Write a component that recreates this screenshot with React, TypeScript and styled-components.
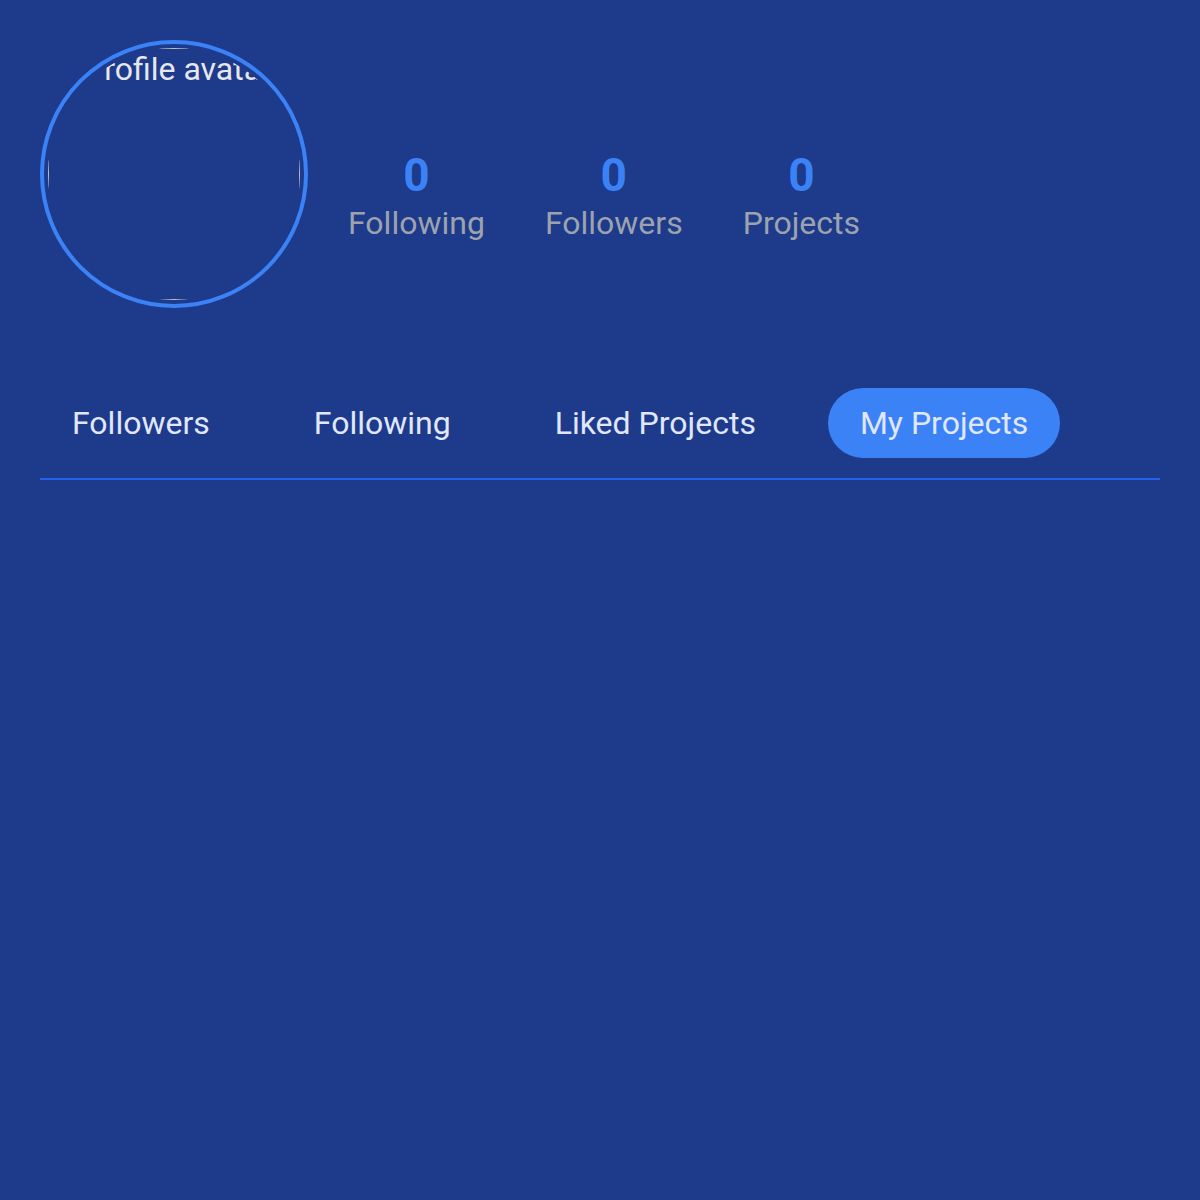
import React from "react";
import styled, { createGlobalStyle } from "styled-components";

const GlobalStyle = createGlobalStyle`
  html, body {
    margin: 0;
    padding: 0;
    background: #1e3a8a;
  }
  body {
    font-family: Roboto, "Noto Sans", "Liberation Sans", sans-serif;
    min-height: 1200px;
  }
`;

const Page = styled.div`
  padding: 40px;
  box-sizing: border-box;
  min-height: 1200px;
  background: #1e3a8a;
`;

const Header = styled.div`
  display: flex;
  align-items: flex-start;
  gap: 40px;
`;

const Avatar = styled.div`
  width: 252px;
  height: 252px;
  padding: 4px;
  flex-shrink: 0;
  border: 4px solid #3b82f6;
  border-radius: 50%;
`;

const AvatarImage = styled.div`
  width: 100%;
  height: 100%;
  border-radius: 50%;
  overflow: hidden;
`;

const AvatarFallback = styled.div`
  width: 100%;
  height: 100%;
  box-sizing: border-box;
  border: 1px solid #c0c0c0;
  padding: 1px 0 0 35px;
  color: #e5e7eb;
  font-size: 32px;
  white-space: nowrap;
`;

const Stats = styled.div`
  display: flex;
  gap: 60px;
  margin-top: 112px;
`;

const Stat = styled.div`
  display: flex;
  flex-direction: column;
  align-items: center;
`;

const StatValue = styled.span`
  color: #3b82f6;
  font-size: 46px;
  font-weight: 700;
  line-height: 1;
  margin-bottom: 6px;
`;

const StatLabel = styled.span`
  color: #9ca3af;
  font-size: 32px;
`;

const TabBar = styled.div`
  display: flex;
  gap: 40px;
  margin-top: 80px;
  padding-bottom: 20px;
  border-bottom: 2px solid #2563eb;
`;

const Tab = styled.button<{ $active?: boolean }>`
  font-family: inherit;
  font-size: 32px;
  line-height: normal;
  color: #e0e7ff;
  border: none;
  padding: 16px 32px;
  border-radius: 9999px;
  cursor: pointer;
  background: ${(p) => (p.$active ? "#3b82f6" : "transparent")};
`;

const stats = [
  { label: "Following", value: 0 },
  { label: "Followers", value: 0 },
  { label: "Projects", value: 0 },
];

const tabs = ["Followers", "Following", "Liked Projects", "My Projects"];

export default function App() {
  const [active, setActive] = React.useState("My Projects");

  return (
    <>
      <GlobalStyle />
      <Page>
        <Header>
          <Avatar>
            <AvatarImage>
              <AvatarFallback>Profile avatar</AvatarFallback>
            </AvatarImage>
          </Avatar>
          <Stats>
            {stats.map((s) => (
              <Stat key={s.label}>
                <StatValue>{s.value}</StatValue>
                <StatLabel>{s.label}</StatLabel>
              </Stat>
            ))}
          </Stats>
        </Header>
        <TabBar>
          {tabs.map((t) => (
            <Tab key={t} $active={t === active} onClick={() => setActive(t)}>
              {t}
            </Tab>
          ))}
        </TabBar>
      </Page>
    </>
  );
}
